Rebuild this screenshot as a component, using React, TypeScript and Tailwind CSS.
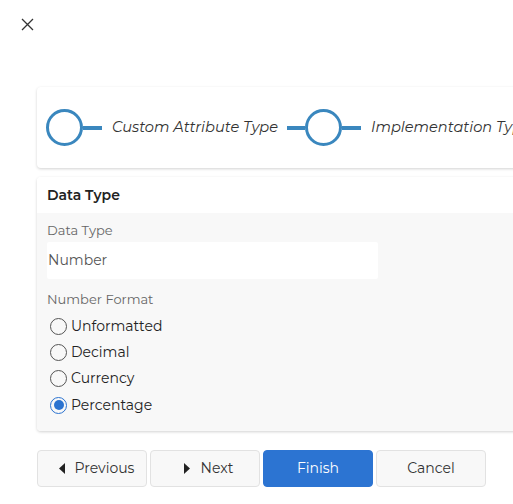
import React from "react";

const font = { fontFamily: "Montserrat, Inter, 'Open Sans', sans-serif" };

function Radio({ label, checked }: { label: string; checked?: boolean }) {
  return (
    <div className="flex items-center h-[26.3px]">
      {checked ? (
        <span className="w-[17px] h-[17px] rounded-full border-[1.5px] border-[#2b73d0] flex items-center justify-center">
          <span className="w-[10px] h-[10px] rounded-full bg-[#2b73d0]" />
        </span>
      ) : (
        <span className="w-[17px] h-[17px] rounded-full border border-[#555]" />
      )}
      <span className="ml-[4px] text-[14px] text-[#222]">{label}</span>
    </div>
  );
}

function Step({ label, leftLine }: { label: string; leftLine?: boolean }) {
  return (
    <div className="flex items-center shrink-0">
      {leftLine && <span className="w-[18px] h-[4px] bg-[#3a87be]" />}
      <span className="w-[37px] h-[37px] rounded-full border-[3px] border-[#3a87be] bg-white" />
      <span className="w-[19px] h-[4px] bg-[#3a87be]" />
      <span className="ml-[10px] italic text-[14.6px] text-[#333] whitespace-nowrap">{label}</span>
    </div>
  );
}

function Btn({ children, primary, extra }: { children: React.ReactNode; primary?: boolean; extra?: string }) {
  return (
    <button
      className={
        "w-[110px] h-[37px] rounded-[4px] text-[14px] flex items-center justify-center " +
        (primary
          ? "bg-[#2c74d2] text-white border border-[#2c74d2]"
          : "bg-[#f8f8f8] text-[#333] border border-[#e2e2e2]") +
        (extra ? " " + extra : "")
      }
    >
      {children}
    </button>
  );
}

export default function App() {
  return (
    <div className="w-[513px] h-[504px] bg-white overflow-hidden relative" style={font}>
      <div className="pt-[18px] pl-[21px] h-[87px]">
        <svg width="13" height="13" viewBox="0 0 13 13" className="block">
          <path d="M1 1L12 12M12 1L1 12" stroke="#333" strokeWidth="1.3" />
        </svg>
      </div>
      <div className="ml-[37px] w-[540px]">
        <div className="h-[81px] bg-white rounded-[4px] shadow-[0_1px_3px_rgba(0,0,0,0.18)] flex items-center pl-[9px] gap-[9px]">
          <Step label="Custom Attribute Type" />
          <Step label="Implementation Type" leftLine />
        </div>
        <div className="mt-[9px] rounded-[4px] shadow-[0_1px_3px_rgba(0,0,0,0.18)] overflow-hidden">
          <div className="h-[36px] bg-white flex items-center pl-[10px] text-[14px] font-semibold text-[#222]">
            Data Type
          </div>
          <div className="bg-[#f8f8f8] pl-[10px] pt-[9px] pb-[13px]">
            <div className="text-[13px] text-[#666] h-[17px] leading-[17px]">Data Type</div>
            <div className="mt-[3px] w-[331px] h-[37px] bg-white rounded-[2px] flex items-center pl-[1px] text-[14px] text-[#555]">
              Number
            </div>
            <div className="mt-[12px] text-[13px] text-[#666] h-[17px] leading-[17px]">Number Format</div>
            <div className="mt-[5px] ml-[3px]">
              <Radio label="Unformatted" />
              <Radio label="Decimal" />
              <Radio label="Currency" />
              <Radio label="Percentage" checked />
            </div>
          </div>
        </div>
        <div className="mt-[19px] flex gap-[3px]">
          <Btn extra="pl-[9px]">
            <svg width="6" height="11" viewBox="0 0 6 11" className="mr-[10px]">
              <path d="M6 0L0 5.5L6 11Z" fill="#222" />
            </svg>
            Previous
          </Btn>
          <Btn extra="pl-[7px]">
            <svg width="6" height="11" viewBox="0 0 6 11" className="mr-[11px]">
              <path d="M0 0L6 5.5L0 11Z" fill="#222" />
            </svg>
            Next
          </Btn>
          <Btn primary>Finish</Btn>
          <Btn>Cancel</Btn>
        </div>
      </div>
    </div>
  );
}
